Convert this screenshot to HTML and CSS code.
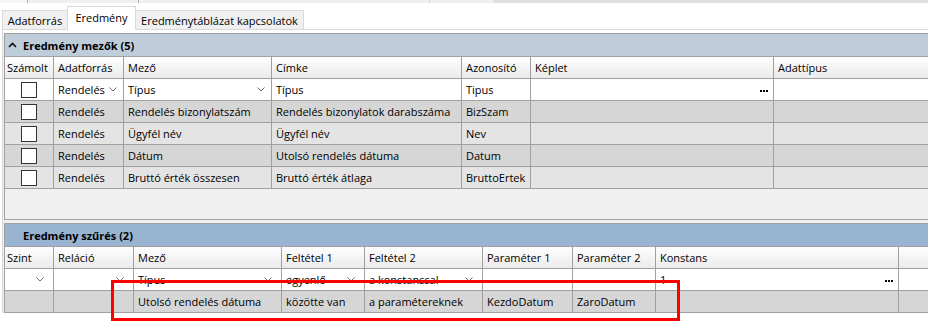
FILE: index.html
```html
<!DOCTYPE html>
<html lang="hu">
<head>
    <meta charset="UTF-8">
    <meta name="viewport" content="width=device-width, initial-scale=1.0">
    <title>Eredmény</title>
    <link rel="stylesheet" href="styles.css">
</head>
<body>
    <div class="top-strip">
        <span class="strip-part part-a"></span>
        <span class="strip-part part-b"></span>
        <span class="strip-part part-c"></span>
        <span class="strip-part part-d"></span>
        <span class="strip-rest"></span>
    </div>

    <div class="tabs">
        <div class="tab tab-1">Adatforrás</div>
        <div class="tab tab-2 active">Eredmény</div>
        <div class="tab tab-3">Eredménytáblázat kapcsolatok</div>
    </div>

    <div class="tab-page">
        <section class="group group-fields">
            <div class="group-head">
                <svg class="collapse" width="9" height="6" viewBox="0 0 9 6"><polyline points="1,5 4.5,1.5 8,5"/></svg>
                <span>Eredmény mezők (5)</span>
            </div>
            <div class="grid fields">
                <div class="row head">
                    <div class="cell first">Számolt</div>
                    <div class="cell">Adatforrás</div>
                    <div class="cell">Mező</div>
                    <div class="cell">Címke</div>
                    <div class="cell">Azonosító</div>
                    <div class="cell">Képlet</div>
                    <div class="cell">Adattípus</div>
                </div>
                <div class="row new">
                    <div class="cell check"><span class="box"></span></div>
                    <div class="cell combo">Rendelés<svg class="dd" width="8" height="5" viewBox="0 0 8 5"><polyline points="0.5,0.5 4,4 7.5,0.5"/></svg></div>
                    <div class="cell combo">Típus<svg class="dd" width="8" height="5" viewBox="0 0 8 5"><polyline points="0.5,0.5 4,4 7.5,0.5"/></svg></div>
                    <div class="cell">Típus</div>
                    <div class="cell">Tipus</div>
                    <div class="cell dots-cell"><span class="dots"><i></i><i></i><i></i></span></div>
                    <div class="cell"></div>
                </div>
                <div class="row dark">
                    <div class="cell check"><span class="box"></span></div>
                    <div class="cell">Rendelés</div>
                    <div class="cell">Rendelés bizonylatszám</div>
                    <div class="cell">Rendelés bizonylatok darabszáma</div>
                    <div class="cell">BizSzam</div>
                    <div class="cell"></div>
                    <div class="cell"></div>
                </div>
                <div class="row light">
                    <div class="cell check"><span class="box"></span></div>
                    <div class="cell">Rendelés</div>
                    <div class="cell">Ügyfél név</div>
                    <div class="cell">Ügyfél név</div>
                    <div class="cell">Nev</div>
                    <div class="cell"></div>
                    <div class="cell"></div>
                </div>
                <div class="row dark">
                    <div class="cell check"><span class="box"></span></div>
                    <div class="cell">Rendelés</div>
                    <div class="cell">Dátum</div>
                    <div class="cell">Utolsó rendelés dátuma</div>
                    <div class="cell">Datum</div>
                    <div class="cell"></div>
                    <div class="cell"></div>
                </div>
                <div class="row light">
                    <div class="cell check"><span class="box"></span></div>
                    <div class="cell">Rendelés</div>
                    <div class="cell">Bruttó érték összesen</div>
                    <div class="cell">Bruttó érték átlaga</div>
                    <div class="cell">BruttoErtek</div>
                    <div class="cell"></div>
                    <div class="cell"></div>
                </div>
            </div>
            <div class="group-fill"></div>
        </section>

        <section class="group group-filter">
            <div class="group-head active">
                <span class="collapse-space"></span>
                <span>Eredmény szűrés (2)</span>
            </div>
            <div class="grid filters">
                <div class="row head">
                    <div class="cell first">Szint</div>
                    <div class="cell">Reláció</div>
                    <div class="cell">Mező</div>
                    <div class="cell">Feltétel 1</div>
                    <div class="cell">Feltétel 2</div>
                    <div class="cell">Paraméter 1</div>
                    <div class="cell">Paraméter 2</div>
                    <div class="cell">Konstans</div>
                    <div class="cell"></div>
                </div>
                <div class="row new">
                    <div class="cell combo"><span></span><svg class="dd" width="8" height="5" viewBox="0 0 8 5"><polyline points="0.5,0.5 4,4 7.5,0.5"/></svg></div>
                    <div class="cell combo"><span></span><svg class="dd" width="8" height="5" viewBox="0 0 8 5"><polyline points="0.5,0.5 4,4 7.5,0.5"/></svg></div>
                    <div class="cell combo">Típus<svg class="dd" width="8" height="5" viewBox="0 0 8 5"><polyline points="0.5,0.5 4,4 7.5,0.5"/></svg></div>
                    <div class="cell combo">egyenlő<svg class="dd" width="8" height="5" viewBox="0 0 8 5"><polyline points="0.5,0.5 4,4 7.5,0.5"/></svg></div>
                    <div class="cell combo">a konstanssal<svg class="dd" width="8" height="5" viewBox="0 0 8 5"><polyline points="0.5,0.5 4,4 7.5,0.5"/></svg></div>
                    <div class="cell"></div>
                    <div class="cell"></div>
                    <div class="cell combo konst">1<span class="dots"><i></i><i></i><i></i></span></div>
                    <div class="cell"></div>
                </div>
                <div class="row dark">
                    <div class="cell"></div>
                    <div class="cell"></div>
                    <div class="cell">Utolsó rendelés dátuma</div>
                    <div class="cell">közötte van</div>
                    <div class="cell">a paramétereknek</div>
                    <div class="cell">KezdoDatum</div>
                    <div class="cell">ZaroDatum</div>
                    <div class="cell"></div>
                    <div class="cell"></div>
                </div>
            </div>
        </section>
    </div>

    <div class="mark"></div>
</body>
</html>
```

FILE: styles.css
```css
* {
    box-sizing: border-box;
}

body {
    position: relative;
    width: 928px;
    height: 322px;
    margin: 0;
    overflow: hidden;
    background-color: #fff;
    font-family: "Open Sans", "Noto Sans", sans-serif;
    font-size: 11px;
    color: #000;
}

/* cut off toolbar above the tabs */
.top-strip {
    display: flex;
    height: 3px;
}

.strip-part {
    height: 3px;
    background-color: #f0f0f0;
    border-right: 1px solid #a8a8a8;
}

.part-a {
    width: 28px;
    background-color: #f5f5f5;
}

.part-b {
    width: 111px;
}

.part-c {
    width: 291px;
    border-right-color: #d4d4d4;
}

.part-d {
    width: 64px;
    border-right: 0;
}

.strip-rest {
    flex: 1;
    background-color: #dedede;
}

/* tabs */
.tabs {
    display: flex;
    align-items: flex-end;
    height: 26px;
    padding-left: 2px;
}

.tab {
    height: 19px;
    padding-top: 1px;
    line-height: 17px;
    text-align: center;
    white-space: nowrap;
    background-color: #f0f0f0;
    border: 1px solid #d9d9d9;
    border-bottom: 0;
}

.tab-1 {
    width: 66px;
}

.tab-2 {
    width: 69px;
    margin-left: -1px;
}

.tab-3 {
    width: 169px;
    margin-left: -1px;
}

.tab.active {
    position: relative;
    z-index: 1;
    height: 24px;
    margin-bottom: -1px;
    padding-top: 2px;
    background-color: #fff;
}

.tab-page {
    margin-left: 2px;
    padding: 3px 0 0 1px;
    border-top: 1px solid #d9d9d9;
    border-left: 1px solid #d9d9d9;
    background: linear-gradient(#fff 3px, #f0f0f0 3px);
}

/* grouped grids */
.group {
    border: 1px solid #a0a0a0;
    border-right: 0;
    background-color: #f0f0f0;
}

.group-filter {
    margin-top: 3px;
    border-bottom: 0;
}

.group-head {
    display: flex;
    align-items: center;
    height: 23px;
    padding-left: 3px;
    background-color: #bfcddb;
    border-bottom: 1px solid #a0a0a0;
    font-weight: 700;
}

.group-head.active {
    background-color: #99b4d1;
}

.collapse {
    margin-right: 6px;
}

.collapse polyline {
    fill: none;
    stroke: #111;
    stroke-width: 1.6;
}

.collapse-space {
    width: 15px;
}

.group-fill {
    height: 30px;
}

.row {
    display: grid;
    height: 22px;
    border-bottom: 1px solid #a0a0a0;
}

.fields .row {
    grid-template-columns: 49px 70px 148px 190px 69px 243px 1fr;
}

.filters .row {
    grid-template-columns: 49px 80px 148px 83px 118px 90px 83px 243px 1fr;
}

.cell {
    display: flex;
    align-items: center;
    padding: 0 4px;
    overflow: hidden;
    white-space: nowrap;
    border-right: 1px solid #a0a0a0;
}

.cell:last-child {
    border-right: 0;
}

.cell.first {
    padding-left: 2px;
}

.row.head {
    background: linear-gradient(#fefefe, #ebebeb);
}

.row.new {
    background-color: #fff;
}

.row.dark {
    background-color: #d6d6d6;
}

.row.light {
    background-color: #e4e4e4;
}

.check {
    justify-content: center;
}

.box {
    width: 16px;
    height: 16px;
    background-color: #fff;
    border: 1px solid #333;
}

.combo {
    justify-content: space-between;
    padding-right: 6px;
}

.filters .combo {
    padding-right: 9px;
}

.filters .konst {
    padding-right: 5px;
}

.dd polyline {
    fill: none;
    stroke: #6e6e6e;
    stroke-width: 1;
}

.dots-cell {
    justify-content: flex-end;
    padding-right: 5px;
}

.dots {
    display: flex;
    gap: 1px;
    margin-top: 2px;
}

.dots i {
    width: 2px;
    height: 2px;
    background-color: #000;
}

/* red highlight drawn over the filter rows */
.mark {
    position: absolute;
    left: 111px;
    top: 280px;
    width: 569px;
    height: 41px;
    border: 3px solid #f00;
}
```
